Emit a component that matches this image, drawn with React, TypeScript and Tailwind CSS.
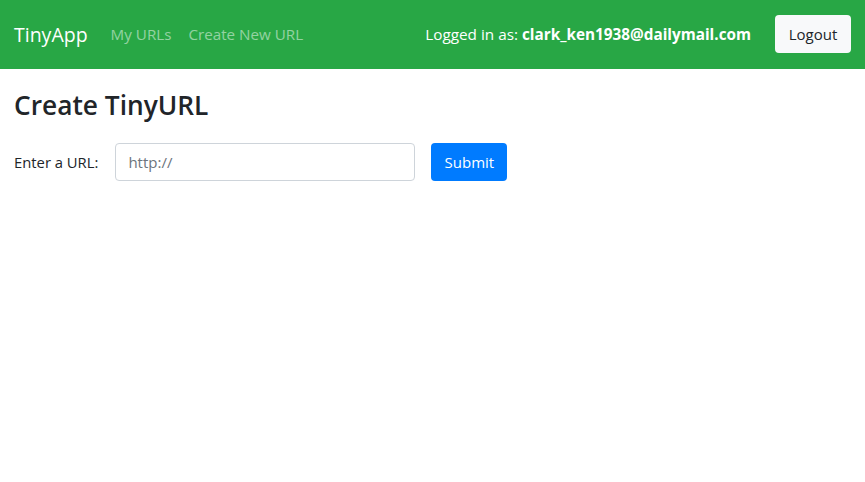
import React from "react";

export default function App() {
  return (
    <div className="min-h-[482px] bg-white text-[#212529]" style={{ fontFamily: '"Open Sans", "Noto Sans", sans-serif' }}>
      <nav className="flex h-[69px] items-center bg-[#28a745] pl-[14px] pr-[14px]">
        <span className="text-[19.5px] leading-none text-white">TinyApp</span>
        <div className="ml-[23px] flex items-center gap-[17px] text-[15.2px] text-[rgba(255,255,255,0.5)]">
          <span>My URLs</span>
          <span>Create New URL</span>
        </div>
        <div className="ml-auto flex items-center">
          <span className="text-[15.3px] text-white">
            Logged in as: <b className="font-bold">clark_ken1938@dailymail.com</b>
          </span>
          <button className="ml-[24px] mb-[1px] h-[38px] w-[76px] rounded-[4px] bg-[#f8f9fa] text-[15px] text-[#212529]">
            Logout
          </button>
        </div>
      </nav>
      <main className="px-[14px]">
        <h3 className="mt-[20px] text-[26.3px] font-semibold leading-[32px]">Create TinyURL</h3>
        <div className="mt-[22px] flex items-center">
          <label className="text-[14.8px]">Enter a URL:</label>
          <input
            className="ml-[17px] h-[38px] w-[300px] rounded-[4px] border border-[#ced4da] px-[12px] text-[15px] placeholder:text-[#6c757d] outline-none"
            placeholder="http://"
          />
          <button className="ml-[16px] h-[38px] w-[76px] rounded-[4px] bg-[#007bff] text-[15px] text-white">
            Submit
          </button>
        </div>
      </main>
    </div>
  );
}
